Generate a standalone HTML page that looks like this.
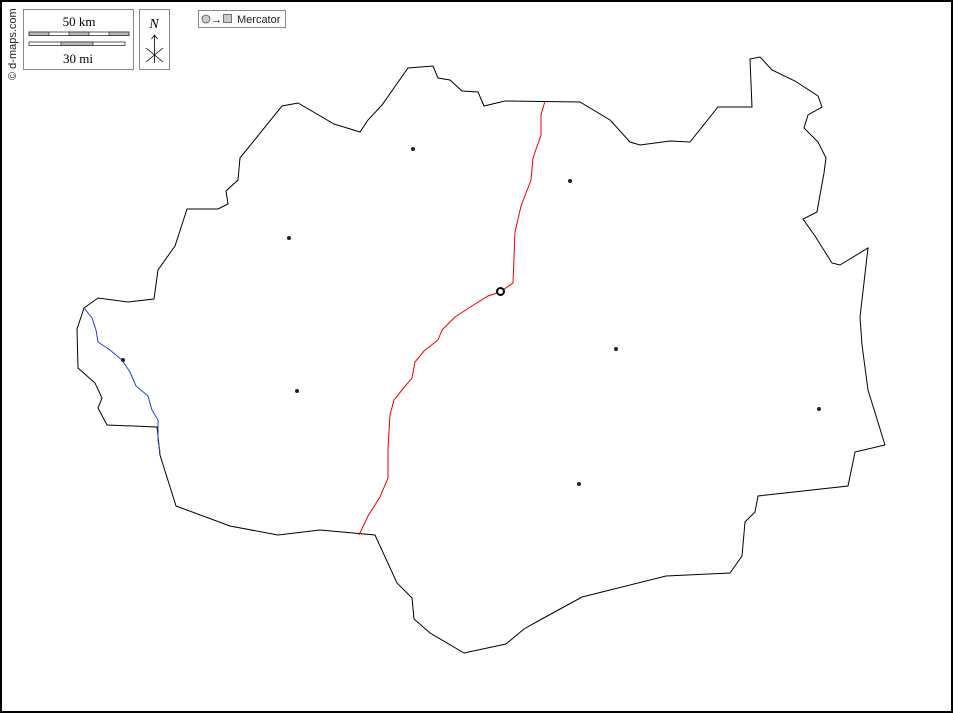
<!DOCTYPE html>
<html><head><meta charset="utf-8"><style>
body{margin:0;background:#fff}
svg{display:block}
</style></head><body>
<svg width="953" height="713" viewBox="0 0 953 713" xmlns="http://www.w3.org/2000/svg">
<rect x="1" y="1" width="951" height="711" fill="#fff" stroke="#000" stroke-width="2"/>
<text transform="translate(16,80) rotate(-90)" font-family="Liberation Sans, sans-serif" font-size="11" fill="#222">© d-maps.com</text>
<rect x="23.5" y="9.5" width="110" height="60" fill="#fff" stroke="#888"/>
<text x="79" y="26" text-anchor="middle" font-family="Liberation Serif, serif" font-size="13">50 km</text>
<g stroke="#333" stroke-width="0.8">
<rect x="29" y="32" width="100" height="3.5" fill="#fff"/>
<rect x="29" y="32" width="20" height="3.5" fill="#bbb"/>
<rect x="69" y="32" width="20" height="3.5" fill="#bbb"/>
<rect x="109" y="32" width="20" height="3.5" fill="#bbb"/>
<rect x="29" y="42" width="96" height="3.5" fill="#fff"/>
<rect x="61" y="42" width="32" height="3.5" fill="#bbb"/>
</g>
<text x="78" y="63" text-anchor="middle" font-family="Liberation Serif, serif" font-size="13">30 mi</text>
<rect x="139.5" y="9.5" width="30" height="60" fill="#fff" stroke="#888"/>
<text x="154" y="28" text-anchor="middle" font-family="Liberation Serif, serif" font-style="italic" font-size="14">N</text>
<g stroke="#000" stroke-width="0.8" fill="none">
<path d="M154.5 35V63M146 48L163 62M146 62L163 48M151.5 39L154.5 35L157.5 39"/>
</g>
<rect x="198.5" y="10.5" width="87" height="17" fill="#fff" stroke="#888"/>
<circle cx="206" cy="19" r="4" fill="#ccc" stroke="#555" stroke-width="0.8"/>
<text x="211" y="23" font-family="Liberation Sans, sans-serif" font-size="11">→</text>
<rect x="223.5" y="14.5" width="8" height="8" fill="#ccc" stroke="#555" stroke-width="0.8"/>
<text x="237" y="23" font-family="Liberation Sans, sans-serif" font-size="11" fill="#222">Mercator</text>
<path fill="none" stroke="#000" stroke-width="1" d="M408 68L433 66L438 78L450 80L462 91L478 92L484 106L505 101L580 102L610 120L630 142L640 145L670 141L690 142L718 107L752 107L750 59L760 57L772 70L795 81L818 96L822 107L808 115L804 128L818 142L826 158L824 173L820 195L817 212L803 219L815 236L832 263L840 265L868 248L860 317L862 345L868 390L885 445L855 452L848 486L758 496L755 512L745 522L742 556L730 573L666 576L582 597L540 620L524 629L506 644L464 653L430 633L414 619L412 598L397 583L375 535L320 530L278 535L230 526L176 506L160 455L157 427L107 425L98 408L102 398L95 383L78 368L77 329L84 308L98 298L128 302L154 299L158 270L175 246L187 209L218 209L228 204L226 191L238 180L240 158L282 106L298 103L334 124L360 132L368 120L382 105Z"/>
<path fill="none" stroke="#e00" stroke-width="1" d="M545 101L541 115L541 135L533 158L531 180L521 206L515 232L513 283L500 292L488 296L472 306L455 317L442 330L438 340L424 351L415 362L412 378L402 390L394 400L390 415L388 448L388 478L380 497L368 516L359 535"/>
<path fill="none" stroke="#1a44cc" stroke-width="1" d="M84 308L92 318L96 330L98 342L110 350L122 360L130 372L136 386L148 396L152 410L158 420L158 440L160 452"/>
<circle cx="500.5" cy="291.5" r="3.5" fill="#fff" stroke="#000" stroke-width="2"/>
<g fill="#222">
<circle cx="413" cy="149" r="2"/><circle cx="570" cy="181" r="2"/><circle cx="289" cy="238" r="2"/>
<circle cx="616" cy="349" r="2"/><circle cx="123" cy="360" r="2"/><circle cx="297" cy="391" r="2"/>
<circle cx="819" cy="409" r="2"/><circle cx="579" cy="484" r="2"/>
</g>
</svg>
</body></html>
